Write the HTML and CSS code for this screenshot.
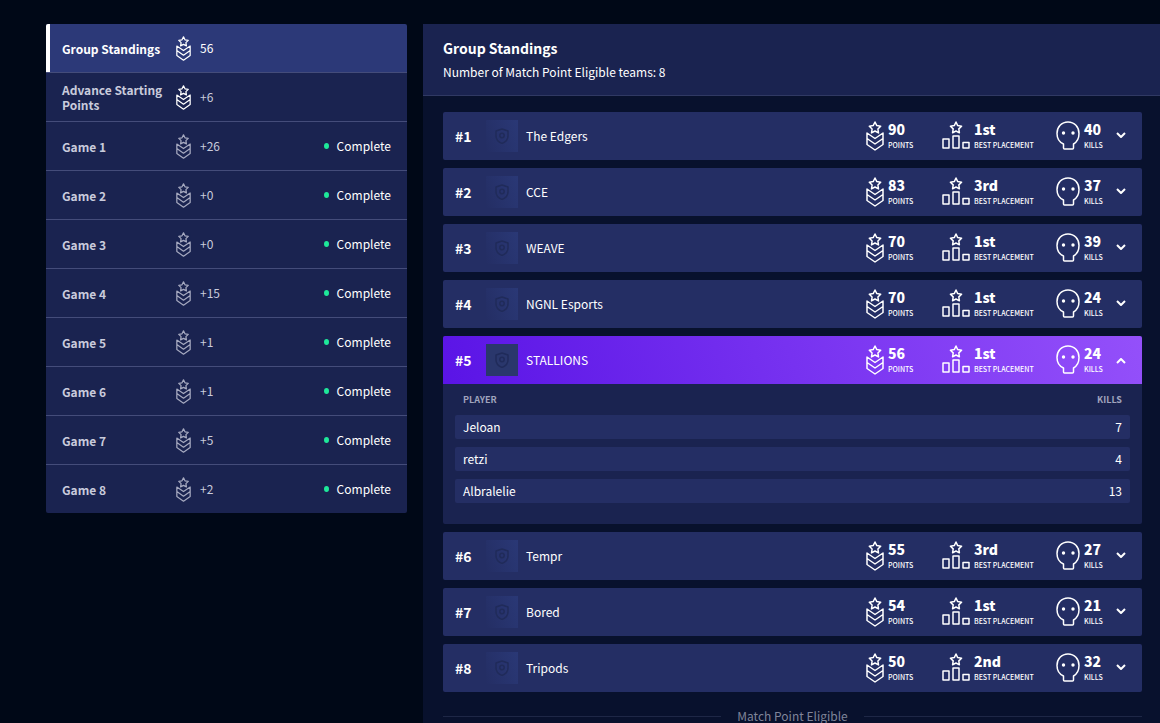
FILE: index.html
```
<!DOCTYPE html>
<html lang="en">
<head>
  <meta charset="UTF-8">
  <meta name="viewport" content="width=device-width, initial-scale=1.0">
  <title>Group Standings</title>
  <link rel="stylesheet" href="styles.css">
</head>
<body>

  <!-- Shared icons -->
  <svg class="sprite" aria-hidden="true">
    <symbol id="points" viewBox="0 0 18 30">
      <path d="M9 1l1.800 3.600 3.900.6-2.800 2.800.6 3.900L9 10l-3.500 1.900.6-3.900L3.300 5.200l3.900-.6z"/>
      <path d="M1 12l8 5.500 8-5.500v11.500l-8 5.500-8-5.500zM1 17.500L9 23l8-5.500"/>
    </symbol>
    <symbol id="placement" viewBox="0 0 28 30">
      <path d="M14 1l1.700 3.600 3.900.6-2.800 2.700.6 3.900L14 10l-3.400 1.800.6-3.900L8.400 5.200l3.900-.6z"/>
      <path d="M1 18h6v9H1zM11 15h6v12h-6zM21 21.500h6V27h-6z"/>
    </symbol>
    <symbol id="skull" viewBox="0 0 24 30">
      <path d="M7.500 27v-4C3 21 1 17.500 1 12.500 1 6 5.500 1 12 1s11 5 11 11.500c0 5-2 8.500-5.500 10.500v4q0 1-1 1h-8q-1 0-1-1z"/>
      <circle class="eye" cx="7.500" cy="12" r="1.700"/>
      <circle class="eye" cx="17" cy="12" r="1.700"/>
    </symbol>
    <symbol id="shield" viewBox="0 0 16 16">
      <path d="M8 1l6 2v5c0 3.500-2.500 6-6 7.500C4.500 14 2 11.500 2 8V3z"/>
      <circle cx="8" cy="7.500" r="2.200"/>
    </symbol>
    <symbol id="arrow" viewBox="0 0 10 8">
      <path d="M1 1l4 4 4-4"/>
    </symbol>
  </svg>

  <div class="layout">

    <!-- Game list -->
    <nav class="games">
      <button class="game active"><span class="game-name">Group Standings</span><svg class="medal"><use href="#points"/></svg><span class="game-points">56</span></button>
      <button class="game bright"><span class="game-name">Advance Starting Points</span><svg class="medal"><use href="#points"/></svg><span class="game-points">+6</span></button>
      <button class="game"><span class="game-name">Game 1</span><svg class="medal"><use href="#points"/></svg><span class="game-points">+26</span><span class="status">Complete</span></button>
      <button class="game"><span class="game-name">Game 2</span><svg class="medal"><use href="#points"/></svg><span class="game-points">+0</span><span class="status">Complete</span></button>
      <button class="game"><span class="game-name">Game 3</span><svg class="medal"><use href="#points"/></svg><span class="game-points">+0</span><span class="status">Complete</span></button>
      <button class="game"><span class="game-name">Game 4</span><svg class="medal"><use href="#points"/></svg><span class="game-points">+15</span><span class="status">Complete</span></button>
      <button class="game"><span class="game-name">Game 5</span><svg class="medal"><use href="#points"/></svg><span class="game-points">+1</span><span class="status">Complete</span></button>
      <button class="game"><span class="game-name">Game 6</span><svg class="medal"><use href="#points"/></svg><span class="game-points">+1</span><span class="status">Complete</span></button>
      <button class="game"><span class="game-name">Game 7</span><svg class="medal"><use href="#points"/></svg><span class="game-points">+5</span><span class="status">Complete</span></button>
      <button class="game"><span class="game-name">Game 8</span><svg class="medal"><use href="#points"/></svg><span class="game-points">+2</span><span class="status">Complete</span></button>
    </nav>

    <!-- Standings -->
    <main class="standings">
      <header class="standings-header">
        <h1>Group Standings</h1>
        <p>Number of Match Point Eligible teams: 8</p>
      </header>

      <div class="teams">
        <section class="team">
          <div class="team-row">
            <span class="rank">#1</span>
            <span class="logo"><svg><use href="#shield"/></svg></span>
            <span class="team-name">The Edgers</span>
            <div class="stat points"><svg><use href="#points"/></svg><div><b>90</b><small>POINTS</small></div></div>
            <div class="stat placement"><svg><use href="#placement"/></svg><div><b>1st</b><small>BEST PLACEMENT</small></div></div>
            <div class="stat kills"><svg><use href="#skull"/></svg><div><b>40</b><small>KILLS</small></div></div>
            <button class="toggle" aria-label="Show players" aria-expanded="false"><svg><use href="#arrow"/></svg></button>
          </div>
        </section>

        <section class="team">
          <div class="team-row">
            <span class="rank">#2</span>
            <span class="logo"><svg><use href="#shield"/></svg></span>
            <span class="team-name">CCE</span>
            <div class="stat points"><svg><use href="#points"/></svg><div><b>83</b><small>POINTS</small></div></div>
            <div class="stat placement"><svg><use href="#placement"/></svg><div><b>3rd</b><small>BEST PLACEMENT</small></div></div>
            <div class="stat kills"><svg><use href="#skull"/></svg><div><b>37</b><small>KILLS</small></div></div>
            <button class="toggle" aria-label="Show players" aria-expanded="false"><svg><use href="#arrow"/></svg></button>
          </div>
        </section>

        <section class="team">
          <div class="team-row">
            <span class="rank">#3</span>
            <span class="logo"><svg><use href="#shield"/></svg></span>
            <span class="team-name">WEAVE</span>
            <div class="stat points"><svg><use href="#points"/></svg><div><b>70</b><small>POINTS</small></div></div>
            <div class="stat placement"><svg><use href="#placement"/></svg><div><b>1st</b><small>BEST PLACEMENT</small></div></div>
            <div class="stat kills"><svg><use href="#skull"/></svg><div><b>39</b><small>KILLS</small></div></div>
            <button class="toggle" aria-label="Show players" aria-expanded="false"><svg><use href="#arrow"/></svg></button>
          </div>
        </section>

        <section class="team">
          <div class="team-row">
            <span class="rank">#4</span>
            <span class="logo"><svg><use href="#shield"/></svg></span>
            <span class="team-name">NGNL Esports</span>
            <div class="stat points"><svg><use href="#points"/></svg><div><b>70</b><small>POINTS</small></div></div>
            <div class="stat placement"><svg><use href="#placement"/></svg><div><b>1st</b><small>BEST PLACEMENT</small></div></div>
            <div class="stat kills"><svg><use href="#skull"/></svg><div><b>24</b><small>KILLS</small></div></div>
            <button class="toggle" aria-label="Show players" aria-expanded="false"><svg><use href="#arrow"/></svg></button>
          </div>
        </section>

        <!-- Expanded team -->
        <section class="team open">
          <div class="team-row">
            <span class="rank">#5</span>
            <span class="logo"><svg><use href="#shield"/></svg></span>
            <span class="team-name">STALLIONS</span>
            <div class="stat points"><svg><use href="#points"/></svg><div><b>56</b><small>POINTS</small></div></div>
            <div class="stat placement"><svg><use href="#placement"/></svg><div><b>1st</b><small>BEST PLACEMENT</small></div></div>
            <div class="stat kills"><svg><use href="#skull"/></svg><div><b>24</b><small>KILLS</small></div></div>
            <button class="toggle" aria-label="Hide players" aria-expanded="true"><svg><use href="#arrow"/></svg></button>
          </div>
          <div class="players">
            <table>
              <thead>
                <tr><th>PLAYER</th><th>KILLS</th></tr>
              </thead>
              <tbody>
                <tr><td>Jeloan</td><td>7</td></tr>
                <tr><td>retzi</td><td>4</td></tr>
                <tr><td>Albralelie</td><td>13</td></tr>
              </tbody>
            </table>
          </div>
        </section>

        <section class="team">
          <div class="team-row">
            <span class="rank">#6</span>
            <span class="logo"><svg><use href="#shield"/></svg></span>
            <span class="team-name">Tempr</span>
            <div class="stat points"><svg><use href="#points"/></svg><div><b>55</b><small>POINTS</small></div></div>
            <div class="stat placement"><svg><use href="#placement"/></svg><div><b>3rd</b><small>BEST PLACEMENT</small></div></div>
            <div class="stat kills"><svg><use href="#skull"/></svg><div><b>27</b><small>KILLS</small></div></div>
            <button class="toggle" aria-label="Show players" aria-expanded="false"><svg><use href="#arrow"/></svg></button>
          </div>
        </section>

        <section class="team">
          <div class="team-row">
            <span class="rank">#7</span>
            <span class="logo"><svg><use href="#shield"/></svg></span>
            <span class="team-name">Bored</span>
            <div class="stat points"><svg><use href="#points"/></svg><div><b>54</b><small>POINTS</small></div></div>
            <div class="stat placement"><svg><use href="#placement"/></svg><div><b>1st</b><small>BEST PLACEMENT</small></div></div>
            <div class="stat kills"><svg><use href="#skull"/></svg><div><b>21</b><small>KILLS</small></div></div>
            <button class="toggle" aria-label="Show players" aria-expanded="false"><svg><use href="#arrow"/></svg></button>
          </div>
        </section>

        <section class="team">
          <div class="team-row">
            <span class="rank">#8</span>
            <span class="logo"><svg><use href="#shield"/></svg></span>
            <span class="team-name">Tripods</span>
            <div class="stat points"><svg><use href="#points"/></svg><div><b>50</b><small>POINTS</small></div></div>
            <div class="stat placement"><svg><use href="#placement"/></svg><div><b>2nd</b><small>BEST PLACEMENT</small></div></div>
            <div class="stat kills"><svg><use href="#skull"/></svg><div><b>32</b><small>KILLS</small></div></div>
            <button class="toggle" aria-label="Show players" aria-expanded="false"><svg><use href="#arrow"/></svg></button>
          </div>
        </section>

        <div class="divider">Match Point Eligible</div>
      </div>
    </main>
  </div>

</body>
</html>
```

FILE: styles.css
```
/* Reset and General Styles */
* {
  margin: 0;
  padding: 0;
  box-sizing: border-box;
}

html {
  scrollbar-width: none;
}

body {
  font-family: "Noto Sans CJK SC", "Noto Sans", sans-serif;
  font-size: 12px;
  font-weight: 400;
  line-height: 16px;
  color: #fff;
  background: #000817;
}

button {
  font: inherit;
  color: inherit;
  background: none;
  border: none;
  text-align: left;
  cursor: pointer;
}

svg {
  fill: none;
  stroke: currentColor;
  stroke-width: 1.5;
  stroke-linejoin: round;
  flex-shrink: 0;
}

.sprite {
  display: none;
}

.eye {
  fill: currentColor;
  stroke: none;
}

.layout {
  display: flex;
  align-items: flex-start;
  gap: 16px;
  padding: 24px 0 0 46px;
}

/* Game list */
.games {
  flex: 0 0 361px;
  border-radius: 2px;
  overflow: hidden;
}

.game {
  display: flex;
  align-items: center;
  width: 100%;
  height: 49px;
  padding: 0 16px;
  background: #1a2350;
  border-bottom: 1px solid #444c7a;
  color: #c9cbdc;
}

.game:last-child {
  height: 48px;
  border-bottom: none;
}

.game.active {
  background: #2c3978;
  box-shadow: inset 4px 0 #fff;
  color: #fff;
}

.game-name {
  width: 114px;
  padding-right: 12px;
  font-weight: 700;
  line-height: 15px;
}

.medal {
  width: 15px;
  height: 25px;
  margin-right: 9px;
  opacity: 0.8;
}

.active .medal,
.bright .medal {
  color: #fff;
  opacity: 1;
}

.status {
  display: flex;
  align-items: center;
  gap: 8px;
  margin-left: auto;
  color: #fff;
}

.status::before {
  content: '';
  width: 5px;
  height: 6px;
  border-radius: 50%;
  background: #1ee89a;
}

/* Standings */
.standings {
  flex: 1;
  min-width: 0;
  background: #08112d;
  border-radius: 2px 0 0 0;
}

.standings-header {
  padding: 16px 20px 15px;
  background: #1a2350;
  border-bottom: 1px solid #303963;
}

h1 {
  font-size: 14px;
  font-weight: 700;
  line-height: 16px;
  margin-bottom: 8px;
}

.teams {
  display: flex;
  flex-direction: column;
  gap: 8px;
  padding: 16px 18px 16px 20px;
}

.team {
  background: #1a2350;
  border-radius: 2px;
  overflow: hidden;
}

.team-row {
  display: flex;
  align-items: center;
  height: 48px;
  padding: 0 16px 0 12px;
  background: #242e64;
}

.open .team-row {
  background: linear-gradient(70deg, #5a14e6, #9450fa);
}

.rank {
  width: 31px;
  font-size: 14px;
  font-weight: 700;
}

.logo {
  display: grid;
  place-items: center;
  width: 32px;
  height: 32px;
  margin-right: 8px;
  background: linear-gradient(70deg, #242e64, #2a3876);
}

.open .logo {
  background: #2a376c;
}

.logo svg {
  width: 16px;
  height: 16px;
  color: #202b5a;
}

.team-name {
  flex: 1;
}

.stat {
  display: flex;
  align-items: center;
  gap: 4px;
  margin-right: 28px;
}

.stat svg {
  height: 30px;
}

.points svg {
  width: 18px;
}

.placement svg {
  width: 28px;
}

.kills svg {
  width: 24px;
}

.points {
  width: 48px;
}

.placement {
  width: 86px;
}

.kills {
  width: 48px;
  margin-right: 12px;
}

.stat div {
  padding-top: 2px;
}

.stat b,
.stat small {
  display: block;
  white-space: nowrap;
}

.stat b {
  font-size: 14px;
  font-weight: 900;
}

.stat small {
  font-size: 7px;
  font-weight: 500;
}

.toggle {
  display: flex;
}

.toggle svg {
  width: 10px;
  height: 8px;
  stroke-width: 2;
}

.open .toggle {
  transform: rotate(180deg);
}

/* Player table */
.players {
  padding: 0 12px 13px;
}

table {
  width: 100%;
  border-collapse: separate;
  border-spacing: 0 8px;
}

th {
  height: 15px;
  padding: 0 8px;
  font-size: 9px;
  font-weight: 700;
  line-height: 15px;
  text-align: left;
  color: #a0a4bd;
}

td {
  height: 24px;
  padding: 0 8px;
  background: #242e64;
}

td:first-child {
  border-radius: 2px 0 0 2px;
}

td:last-child {
  border-radius: 0 2px 2px 0;
}

th:last-child,
td:last-child {
  text-align: right;
}

/* Section divider */
.divider {
  display: flex;
  align-items: center;
  gap: 16px;
  padding-top: 8px;
  color: #7f8499;
}

.divider::before,
.divider::after {
  content: '';
  flex: 1;
  height: 1px;
  background: #1e2746;
}
```
